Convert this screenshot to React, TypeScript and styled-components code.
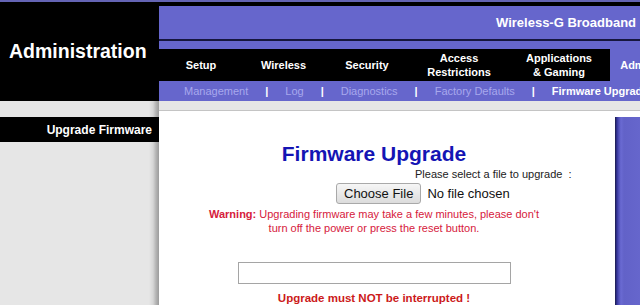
import { Fragment } from "react";
import styled, { createGlobalStyle } from "styled-components";

const GlobalStyle = createGlobalStyle`
  html, body {
    margin: 0;
    padding: 0;
    background: #ffffff;
  }
  body {
    font-family: "Liberation Sans", Arial, sans-serif;
  }
`;

const Page = styled.div`
  width: 640px;
  height: 305px;
  overflow: hidden;
  display: flex;
  flex-direction: column;
  background: #e6e6e6;
`;

const TopStrip = styled.div`
  height: 2px;
  flex-shrink: 0;
  background: #6464b4;
`;

const Header = styled.header`
  display: grid;
  grid-template-columns: 159px 1fr;
  height: 99px;
  flex-shrink: 0;
  background: #000000;
`;

const PageTitle = styled.h1`
  margin: 0;
  padding-left: 9px;
  display: flex;
  align-items: center;
  color: #ffffff;
  font-size: 19.5px;
  font-weight: bold;
`;

const HeaderRight = styled.div`
  display: flex;
  flex-direction: column;
  padding-top: 4px;
  min-width: 0;
`;

const Banner = styled.div`
  height: 33px;
  display: flex;
  align-items: center;
  padding-left: 337px;
  background: #6666cc;
  border-bottom: 2px solid #16163e;
  color: #ffffff;
  font-size: 13px;
  font-weight: bold;
  white-space: nowrap;
  overflow: hidden;
`;

const Band = styled.div`
  height: 8px;
  background: #6666cc;
`;

const Nav = styled.nav`
  display: flex;
  height: 32px;
  overflow: hidden;
`;

const Tab = styled.div<{ $w: number; $active?: boolean }>`
  width: ${(p) => p.$w}px;
  flex-shrink: 0;
  display: flex;
  align-items: center;
  justify-content: center;
  text-align: center;
  background: ${(p) => (p.$active ? "#6666cc" : "#000000")};
  color: #ffffff;
  font-size: 11px;
  font-weight: bold;
  line-height: 14px;
  white-space: pre-line;
`;

const SubMenu = styled.div`
  height: 20px;
  display: flex;
  align-items: center;
  gap: 17px;
  padding-left: 25px;
  background: #6666cc;
  font-size: 11px;
  white-space: nowrap;
  overflow: hidden;
`;

const SubLink = styled.span<{ $current?: boolean }>`
  color: ${(p) => (p.$current ? "#ffffff" : "#a8a8ec")};
  font-weight: ${(p) => (p.$current ? "bold" : "normal")};
`;

const Sep = styled.span`
  color: #ffffff;
  font-weight: bold;
`;

const Body = styled.div`
  flex: 1;
  min-height: 0;
  display: grid;
  grid-template-columns: 159px 1fr;
`;

const Sidebar = styled.aside`
  padding-top: 16px;
  background: linear-gradient(
    to right,
    #e6e6e6 0,
    #e6e6e6 149px,
    #d6d6d6 153px,
    #b4b4b4 156px,
    #9c9c9c 159px
  );
`;

const SideItem = styled.div`
  height: 25px;
  display: flex;
  align-items: center;
  justify-content: flex-end;
  padding-right: 7px;
  background: #000000;
  color: #ffffff;
  font-size: 12px;
  font-weight: bold;
`;

const Main = styled.main`
  display: flex;
  flex-direction: column;
  padding-top: 9px;
  min-width: 0;
`;

const Panel = styled.section`
  flex: 1;
  display: flex;
  background: #ffffff;
  border-top: 1px solid #c4c4c4;
`;

const Content = styled.div`
  flex: 1;
  display: flex;
  flex-direction: column;
  align-items: center;
  padding-right: 26px;
`;

const Rail = styled.div`
  width: 25px;
  flex-shrink: 0;
  margin-top: 6px;
  background: linear-gradient(
    to right,
    #1a1a4a 0,
    #34349a 2px,
    #5454bc 4px,
    #6a6ad2 6px,
    #6262c8 9px,
    #6666cc 100%
  );
`;

const Title = styled.h2`
  margin: 31px 0 0;
  color: #1414b4;
  font-size: 21px;
  font-weight: bold;
  line-height: 24px;
`;

const Prompt = styled.div`
  align-self: flex-start;
  margin: 1px 0 0 256px;
  color: #222222;
  font-size: 11px;
  line-height: 14px;
  white-space: pre;
`;

const FileRow = styled.div`
  align-self: flex-start;
  margin: 2px 0 0 177px;
  display: flex;
  align-items: center;
  gap: 6px;
`;

const FileButton = styled.button`
  height: 21px;
  padding: 0 7px;
  border: 1px solid #a9a9a9;
  border-radius: 3px;
  background: linear-gradient(#f6f6f6, #dcdcdc);
  color: #111111;
  font-family: "Liberation Sans", Arial, sans-serif;
  font-size: 13px;
`;

const FileName = styled.span`
  color: #111111;
  font-size: 13px;
`;

const Warning = styled.p`
  margin: 3px 0 0;
  color: #d6203c;
  font-size: 11px;
  line-height: 14px;
  text-align: center;

  strong {
    font-weight: bold;
  }
`;

const PathBox = styled.input`
  box-sizing: border-box;
  width: 273px;
  height: 22px;
  margin-top: 27px;
  border: 1px solid #a5a5a5;
  background: #ffffff;
`;

const Notice = styled.div`
  margin-top: 7px;
  color: #cc1a1a;
  font-size: 11.5px;
  font-weight: bold;
  line-height: 14px;
`;

const tabs = [
  { label: "Setup", w: 84 },
  { label: "Wireless", w: 81 },
  { label: "Security", w: 86 },
  { label: "Access\nRestrictions", w: 98 },
  { label: "Applications\n& Gaming", w: 102 },
  { label: "Administration", w: 98, active: true },
];

const subLinks = ["Management", "Log", "Diagnostics", "Factory Defaults"];

export default function App() {
  return (
    <>
      <GlobalStyle />
      <Page>
        <TopStrip />
        <Header>
          <PageTitle>Administration</PageTitle>
          <HeaderRight>
            <Banner>Wireless-G Broadband Router</Banner>
            <Band />
            <Nav>
              {tabs.map((t) => (
                <Tab key={t.label} $w={t.w} $active={t.active}>
                  {t.label}
                </Tab>
              ))}
            </Nav>
            <SubMenu>
              {subLinks.map((s) => (
                <Fragment key={s}>
                  <SubLink>{s}</SubLink>
                  <Sep>|</Sep>
                </Fragment>
              ))}
              <SubLink $current>Firmware Upgrade</SubLink>
            </SubMenu>
          </HeaderRight>
        </Header>
        <Body>
          <Sidebar>
            <SideItem>Upgrade Firmware</SideItem>
          </Sidebar>
          <Main>
            <Panel>
              <Content>
                <Title>Firmware Upgrade</Title>
                <Prompt>Please select a file to upgrade  :</Prompt>
                <FileRow>
                  <FileButton type="button">Choose File</FileButton>
                  <FileName>No file chosen</FileName>
                </FileRow>
                <Warning>
                  <strong>Warning:</strong> Upgrading firmware may take a few minutes, please don't
                  <br />
                  turn off the power or press the reset button.
                </Warning>
                <PathBox type="text" readOnly />
                <Notice>Upgrade must NOT be interrupted !</Notice>
              </Content>
              <Rail />
            </Panel>
          </Main>
        </Body>
      </Page>
    </>
  );
}
